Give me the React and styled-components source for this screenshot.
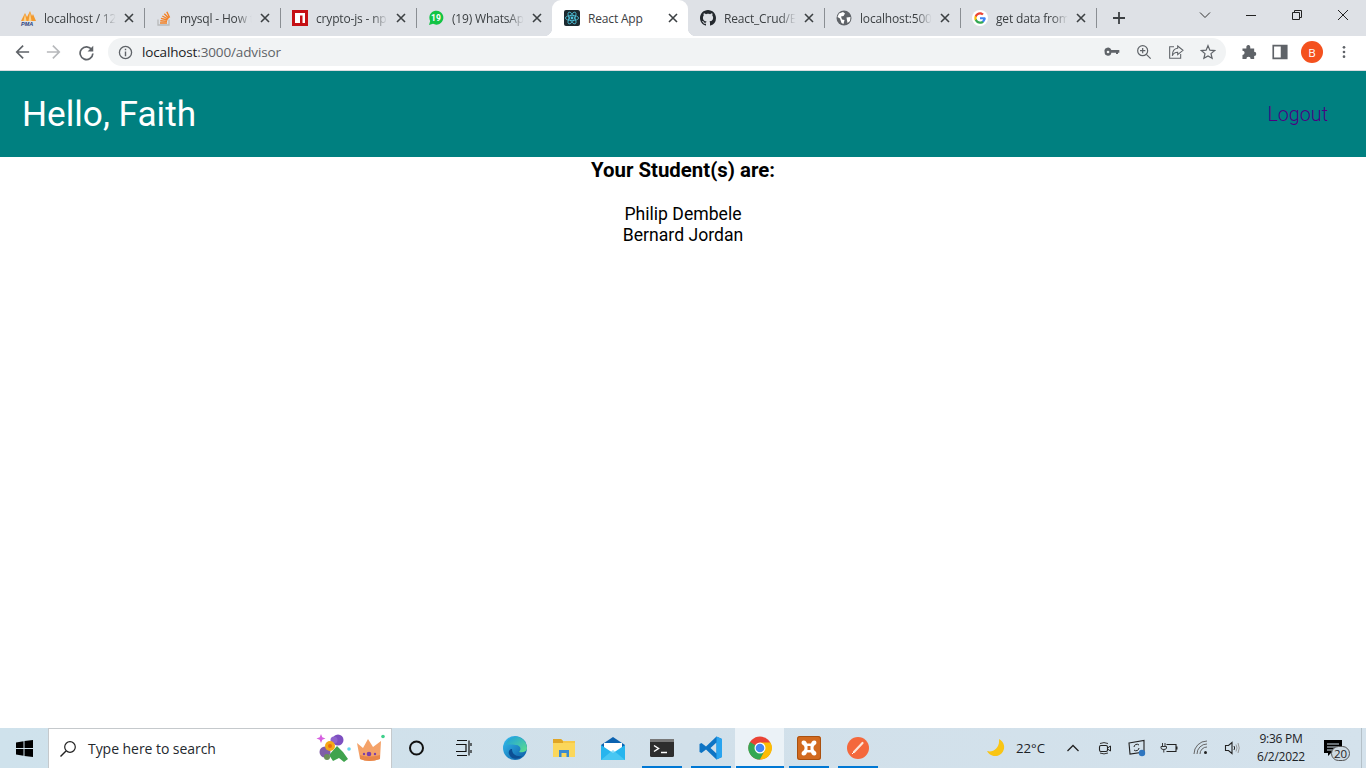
import React from 'react'
import styled, { createGlobalStyle } from 'styled-components'

const GlobalStyle = createGlobalStyle`
  html, body { margin: 0; padding: 0; height: 100%; background: #fff; overflow: hidden; }
  #root { height: 100%; }
`

const Screen = styled.div`
  display: flex;
  flex-direction: column;
  width: 1366px;
  height: 768px;
  font-family: "Open Sans", "Liberation Sans", sans-serif;
`

/* chrome tab strip */
const TabStrip = styled.div`
  display: flex;
  align-items: stretch;
  height: 36px;
  padding-left: 8px;
  background: #dee1e6;
  flex: none;
`

const Tab = styled.div`
  position: relative;
  display: flex;
  align-items: center;
  width: 136px;
  box-sizing: border-box;
  padding: 0 10px 0 12px;
  color: #3c4043;
  background: ${p => (p.$active ? '#fff' : 'transparent')};
  border-radius: ${p => (p.$active ? '9px 9px 0 0' : '0')};

  &::after {
    content: '';
    display: ${p => (p.$sep ? 'block' : 'none')};
    position: absolute;
    right: -1px;
    top: 8px;
    height: 20px;
    width: 1px;
    background: #8a8e93;
  }
`

const Flare = styled.span`
  position: absolute;
  bottom: 0;
  ${p => (p.$left ? 'left: -8px;' : 'right: -8px;')}
  width: 8px;
  height: 8px;
  background: radial-gradient(circle at ${p => (p.$left ? '0 0' : '100% 0')}, #dee1e6 8px, #fff 8.5px);
`

const Favicon = styled.span`
  display: flex;
  flex: none;
  width: 16px;
  height: 16px;
  margin-right: 8px;
`

const TabTitle = styled.span`
  flex: 1;
  white-space: nowrap;
  font-size: 12px;
  letter-spacing: -0.17px;
  mask-image: ${p => (p.$fade ? 'linear-gradient(to right, #000 72%, transparent 92%)' : 'none')};
`

const TabClose = styled.svg`
  flex: none;
  width: 10px;
  height: 10px;
  margin-left: 2px;
`

const NewTab = styled.svg`
  flex: none;
  width: 14px;
  height: 14px;
  margin: 11px 0 0 16px;
`

const WindowControls = styled.div`
  display: flex;
  margin-left: auto;
  align-items: flex-start;
`

const WindowButton = styled.div`
  display: flex;
  align-items: center;
  justify-content: center;
  width: 46px;
  height: 29px;
`

/* chrome toolbar */
const Toolbar = styled.div`
  display: flex;
  align-items: center;
  height: 32px;
  padding: 0 5px 2px 6px;
  background: #fff;
  border-bottom: 1px solid #dadce0;
  flex: none;
`

const NavButton = styled.div`
  display: flex;
  align-items: center;
  justify-content: center;
  width: 32px;
  height: 28px;
  flex: none;
`

const AddressBar = styled.div`
  display: flex;
  align-items: center;
  width: 1118px;
  height: 28px;
  margin: 0 6px;
  padding: 0 2px 0 10px;
  box-sizing: border-box;
  background: #f1f3f4;
  border-radius: 14px;
  flex: none;
`

const Url = styled.span`
  flex: 1;
  margin-left: 9px;
  font-size: 13.5px;
  letter-spacing: -0.14px;
  color: #5f6368;

  b {
    font-weight: 400;
    color: #202124;
  }
`

const Avatar = styled.div`
  display: flex;
  align-items: center;
  justify-content: center;
  width: 22px;
  height: 22px;
  border-radius: 50%;
  background: #f4511e;
  color: #fff;
  font-size: 11.5px;
`

/* the page itself */
const Header = styled.header`
  display: flex;
  align-items: center;
  justify-content: space-between;
  height: 86px;
  padding: 0 38px 0 22px;
  background: #008080;
  font-family: Roboto, sans-serif;
  flex: none;
`

const Greeting = styled.h1`
  margin: 0;
  font-size: 35.2px;
  font-weight: 400;
  color: #fff;
`

const Logout = styled.a`
  font-size: 19.7px;
  font-weight: 300;
  color: #4b0082;
`

const Content = styled.main`
  flex: 1;
  text-align: center;
  font-family: Roboto, sans-serif;
  color: #000;
`

const Title = styled.h3`
  margin: 0 0 22px;
  padding-top: 1px;
  font-size: 20.4px;
  line-height: 24px;
  font-weight: 700;
`

const Student = styled.div`
  font-size: 17.6px;
  line-height: 21px;
`

/* windows taskbar */
const Taskbar = styled.footer`
  display: flex;
  align-items: stretch;
  height: 40px;
  background: linear-gradient(to right, #cfe2ec, #d1e0ea 50%, #d4e2ec);
  flex: none;
`

const StartButton = styled.div`
  display: flex;
  align-items: center;
  justify-content: center;
  width: 48px;
`

const SearchBox = styled.div`
  display: flex;
  align-items: center;
  width: 344px;
  box-sizing: border-box;
  padding: 0 6px 0 10px;
  background: #fff;
  border: 1px solid #c5c9cc;
  border-bottom: none;
`

const SearchText = styled.span`
  flex: 1;
  margin-left: 11px;
  font-size: 14px;
  letter-spacing: -0.05px;
  color: #24292e;
`

const Sticker = styled.svg`
  flex: none;
  height: 34px;
  width: ${p => p.$w}px;
`

const TaskSlot = styled.div`
  position: relative;
  display: flex;
  align-items: center;
  justify-content: center;
  width: 49px;
  background: ${p => (p.$lit ? '#ebf2f7' : 'transparent')};

  &::after {
    content: '';
    display: ${p => (p.$open ? 'block' : 'none')};
    position: absolute;
    bottom: 0;
    left: ${p => (p.$lit ? '1px' : '5px')};
    right: ${p => (p.$lit ? '0' : '4px')};
    height: 2px;
    background: #0078d4;
  }
`

const Tray = styled.div`
  display: flex;
  align-items: stretch;
  margin-left: auto;
  color: #1c2226;
`

const Weather = styled.div`
  display: flex;
  align-items: center;
  width: 77px;
  padding-left: 6px;
  box-sizing: border-box;
  font-size: 13.2px;
  gap: 10px;
`

const TrayIcon = styled.div`
  display: flex;
  align-items: center;
  justify-content: center;
  width: 32px;
`

const Clock = styled.div`
  display: flex;
  flex-direction: column;
  align-items: center;
  justify-content: center;
  width: 64px;
  font-size: 12px;
  letter-spacing: -0.25px;
  line-height: 18px;
`

const Notify = styled.div`
  position: relative;
  display: flex;
  align-items: center;
  justify-content: center;
  width: 40px;
  margin-right: 8px;
`

const Badge = styled.span`
  position: absolute;
  left: 18px;
  top: 18px;
  width: 19px;
  height: 15px;
  line-height: 14px;
  box-sizing: border-box;
  border: 1px solid #555;
  border-radius: 8px;
  background: #ccd9e2;
  text-align: center;
  font-size: 11.5px;
`

const ShowDesktop = styled.div`
  width: 5px;
  box-sizing: border-box;
  border-left: 1px solid #b4c0c8;
`

const Ico = ({ children, size = 16, view = 24, ...rest }) => (
  <svg width={size} height={size} viewBox={`0 0 ${view} ${view}`} fill="none" {...rest}>
    {children}
  </svg>
)

const PmaIcon = () => (
  <Ico view={16}>
    <path d="M1 11 L5 3 L7 7 L10 1 L12 6 L13 4 L16 11 Z" fill="#f39a2e" />
    <path d="M5 4 L6.5 11 H3.5 Z M10 2 L11.5 11 H8.5 Z" fill="#fbd08a" />
    <text x="1" y="15.5" fontSize="5.5" fontWeight="700" fontStyle="italic" fontFamily="Liberation Sans" fill="#2a3f7c">PMA</text>
  </Ico>
)

const StackIcon = () => (
  <Ico view={16}>
    <path d="M2 9.5 V15 H13 V9.5" stroke="#b8b9ba" strokeWidth="1.3" />
    <path d="M4 13 H11 M4.3 10.7 L11 11.4 M5 8.4 L11.5 10 M6.3 6 L12 9 M8.3 3.8 L12.8 8.2 M10.8 1.8 L13.6 7.6" stroke="#f48024" strokeWidth="1.4" />
  </Ico>
)

const NpmIcon = () => (
  <Ico view={16}>
    <rect width="16" height="16" fill="#c50f14" />
    <path d="M3 3 H13 V13 H10.5 V5.5 H8 V13 H3 Z" fill="#fff" />
  </Ico>
)

const WhatsIcon = () => (
  <Ico view={16}>
    <path d="M1 15 L2.2 11 A7 7 0 1 1 5 13.8 Z" fill="#12c445" />
    <text x="8" y="11" fontSize="8.5" fontWeight="700" textAnchor="middle" fontFamily="Roboto" fill="#fff">19</text>
  </Ico>
)

const ReactIcon = () => (
  <Ico view={16}>
    <rect width="16" height="16" rx="2" fill="#1c2a30" />
    <g stroke="#4fc3dc" strokeWidth="0.8">
      <ellipse cx="8" cy="8" rx="6.6" ry="2.6" />
      <ellipse cx="8" cy="8" rx="6.6" ry="2.6" transform="rotate(60 8 8)" />
      <ellipse cx="8" cy="8" rx="6.6" ry="2.6" transform="rotate(120 8 8)" />
    </g>
    <circle cx="8" cy="8" r="1.4" fill="#4fc3dc" />
  </Ico>
)

const GithubIcon = () => (
  <Ico view={16}>
    <path
      fill="#24292e"
      d="M8 0C3.58 0 0 3.58 0 8c0 3.54 2.29 6.53 5.47 7.59.4.07.55-.17.55-.38 0-.19-.01-.82-.01-1.49-2.01.37-2.53-.49-2.69-.94-.09-.23-.48-.94-.82-1.13-.28-.15-.68-.52-.01-.53.63-.01 1.08.58 1.23.82.72 1.21 1.87.87 2.33.66.07-.52.28-.87.51-1.07-1.78-.2-3.64-.89-3.64-3.95 0-.87.31-1.59.82-2.15-.08-.2-.36-1.02.08-2.12 0 0 .67-.21 2.2.82.64-.18 1.32-.27 2-.27s1.36.09 2 .27c1.53-1.04 2.2-.82 2.2-.82.44 1.1.16 1.92.08 2.12.51.56.82 1.27.82 2.15 0 3.07-1.87 3.75-3.65 3.95.29.25.54.73.54 1.48 0 1.07-.01 1.93-.01 2.2 0 .21.15.46.55.38A8.01 8.01 0 0 0 16 8c0-4.42-3.58-8-8-8z"
    />
  </Ico>
)

const GlobeIcon = () => (
  <Ico view={16}>
    <circle cx="8" cy="8" r="7.5" fill="#5f6368" />
    <path d="M3 3.5 L7 2 L9 3.5 L7.5 6 L5 6.5 L6 9.5 L8.5 10 L7.5 14 L5.5 13 L4 8.5 L1.5 7 Z M10.5 7.5 L14.5 7 L14 11 L11.5 13 Z" fill="#fff" />
  </Ico>
)

const GoogleIcon = () => (
  <Ico view={16}>
    <circle cx="8" cy="8" r="8" fill="#fff" />
    <g transform="translate(8 8) scale(1.22) translate(-8 -8)">
      <path d="M12.4 8.2c0-.3 0-.6-.1-.9H8v1.7h2.5c-.1.6-.4 1-.9 1.4v1.1h1.5c.9-.8 1.4-2 1.8-3.3z" fill="#4285f4" />
      <path d="M8 12.8c1.3 0 2.3-.4 3.1-1.2L9.6 10.4c-.4.3-1 .5-1.6.5-1.2 0-2.3-.8-2.7-2H3.8v1.2C4.6 11.7 6.2 12.8 8 12.8z" fill="#34a853" />
      <path d="M5.3 8.9c-.2-.6-.2-1.2 0-1.8V5.9H3.8c-.6 1.2-.6 2.9 0 4.2l1.5-1.2z" fill="#fbbc05" />
      <path d="M8 5.1c.7 0 1.3.2 1.8.7l1.3-1.3C10.3 3.7 9.2 3.2 8 3.2c-1.8 0-3.4 1.1-4.2 2.7l1.5 1.2c.4-1.2 1.5-2 2.7-2z" fill="#ea4335" />
    </g>
  </Ico>
)

const tabs = [
  { title: 'localhost / 12', icon: <PmaIcon />, sep: true, fade: true },
  { title: 'mysql - How t', icon: <StackIcon />, sep: true, fade: true },
  { title: 'crypto-js - np', icon: <NpmIcon />, sep: true, fade: true },
  { title: '(19) WhatsAp', icon: <WhatsIcon />, fade: true },
  { title: 'React App', icon: <ReactIcon />, active: true },
  { title: 'React_Crud/E', icon: <GithubIcon />, sep: true, fade: true },
  { title: 'localhost:500', icon: <GlobeIcon />, sep: true, fade: true },
  { title: 'get data from', icon: <GoogleIcon />, sep: true, fade: true },
]

const CloseGlyph = () => (
  <TabClose viewBox="0 0 10 10">
    <path d="M1 1 L9 9 M9 1 L1 9" stroke="#3c4043" strokeWidth="1.6" />
  </TabClose>
)

const G = '#5f6368'

const Edge = () => (
  <Ico size={24}>
    <defs>
      <linearGradient id="edgeA" x1="0" y1="0" x2="1" y2="1">
        <stop offset="0" stopColor="#35c1f1" />
        <stop offset="1" stopColor="#0c59a4" />
      </linearGradient>
      <linearGradient id="edgeB" x1="0" y1="0" x2="1" y2="1">
        <stop offset="0" stopColor="#1b9de2" />
        <stop offset="1" stopColor="#5fe08a" />
      </linearGradient>
    </defs>
    <circle cx="12" cy="12" r="12" fill="url(#edgeA)" />
    <path d="M3 8 C5 2 11 0 15 1 C20 2 24 7 24 12 C24 16 19 17 16 16 C19 13 17 9 13 9 C8 8 4 9 3 8 Z" fill="url(#edgeB)" />
    <path d="M9 13 C9 18 13 21 19 20 C16 24 8 24 6 18 C5 15 7 13 9 13 Z" fill="#0c4f94" />
  </Ico>
)

const Folder = () => (
  <Ico size={24}>
    <path d="M1 3 H9 L11 5 H23 V21 H1 Z" fill="#f7c948" />
    <path d="M1 3 H9 L11 5 V7 H1 Z" fill="#e0a526" />
    <path d="M1 7 H23 V21 H1 Z" fill="#fbd75b" />
    <path d="M7 21 V14 H17 V21 H14.5 V17 H9.5 V21 Z" fill="#3b8bd0" />
  </Ico>
)

const Mail = () => (
  <Ico size={24}>
    <path d="M0 9 L12 1 L24 9 V24 H0 Z" fill="#0b62b0" />
    <path d="M3 7 H21 V17 H3 Z" fill="#fff" />
    <path d="M0 9 L12 17 L24 9 V24 H0 Z" fill="#26b5ee" />
    <path d="M0 24 L12 14 L24 24 Z" fill="#55cff5" opacity=".7" />
  </Ico>
)

const Terminal = () => (
  <Ico size={24}>
    <rect y="3" width="24" height="18" rx="1.5" fill="#2e2e2e" />
    <rect y="3" width="24" height="3" fill="#777" />
    <path d="M4 9.5 L8.5 12.5 L4 15.5" stroke="#fff" strokeWidth="1.5" />
    <path d="M11 16.5 H17" stroke="#fff" strokeWidth="1.5" />
  </Ico>
)

const VsCode = () => (
  <Ico size={24}>
    <path d="M17.5 0.5 L23 3 V21 L17.5 23.5 L7 13.5 L2.5 17 L0.5 16 V8 L2.5 7 L7 10.5 Z M17.5 6.5 L11.5 12 L17.5 17.5 Z" fill="#0e74c4" />
    <path d="M17.5 0.5 L23 3 V21 L17.5 23.5 Z" fill="#29a4ef" />
  </Ico>
)

const ChromeLogo = () => (
  <Ico size={24}>
    <circle cx="12" cy="12" r="11.5" fill="#ea4335" />
    <path d="M12 12 L2 6 A11.5 11.5 0 0 0 12 23.5 L17.5 14 Z" fill="#34a853" />
    <path d="M12 6.5 H22.5 A11.5 11.5 0 0 1 12 23.5 L17 14 Z" fill="#fbbc05" />
    <circle cx="12" cy="12" r="5.5" fill="#fff" />
    <circle cx="12" cy="12" r="4.3" fill="#4285f4" />
  </Ico>
)

const Xampp = () => (
  <Ico size={24}>
    <rect width="24" height="24" rx="2.5" fill="#d2691e" />
    <rect x="0.5" y="0.5" width="23" height="23" rx="2.5" stroke="#a9500f" />
    <path
      d="M6.5 4.5 C9 4.5 9.5 6 10 7.5 H14 C14.5 6 15 4.5 17.5 4.5 C20 4.5 20 8 18 9 C16 10 16 14 18 15 C20 16 20 19.5 17.5 19.5 C15 19.5 14.5 18 14 16.5 H10 C9.5 18 9 19.5 6.5 19.5 C4 19.5 4 16 6 15 C8 14 8 10 6 9 C4 8 4 4.5 6.5 4.5 Z M10.5 10 H13.5 V14 H10.5 Z"
      fill="#fff"
      fillRule="evenodd"
    />
  </Ico>
)

const Sublime = () => (
  <Ico size={24}>
    <circle cx="12" cy="12" r="11" fill="#f4683c" />
    <path d="M8 16 L16.5 7" stroke="#fde5d8" strokeWidth="2.2" strokeLinecap="round" />
    <path d="M6 18 L8 16" stroke="#fff" strokeWidth="1" />
  </Ico>
)

const Bouquet = () => (
  <Sticker $w={40} viewBox="0 0 40 34">
    <path d="M6 2 L7.3 5.2 L10.5 6.5 L7.3 7.8 L6 11 L4.7 7.8 L1.5 6.5 L4.7 5.2 Z" fill="#d65fe0" />
    <path d="M14 23 L22 14 L28 20 L33 27 L29 30 L24 26 L18 29 Z" fill="#3fa34d" />
    <circle cx="23" cy="8" r="5.5" fill="#7d4fc0" />
    <circle cx="19" cy="8" r="3.5" fill="#8f63cc" />
    <circle cx="10" cy="20" r="5.5" fill="#7f5ea8" />
    <circle cx="12" cy="25" r="3" fill="#6a8f5a" />
    <circle cx="15" cy="14" r="5" fill="#f4a916" />
    <circle cx="15" cy="14" r="2" fill="#e86c12" />
    <circle cx="34" cy="17" r="1.8" fill="#62d5ea" />
  </Sticker>
)

const Crown = () => (
  <Sticker $w={30} viewBox="0 0 30 34">
    <path d="M2 11 L8 16 L13 7 L18 15 L26 9 L25 27 Q14 31 5 27 Z" fill="#f4a269" />
    <path d="M5 23 Q14 26 25 23 L25 27 Q14 31 5 27 Z" fill="#e98648" />
    <circle cx="14" cy="22" r="2.3" fill="#7b3fa8" />
    <circle cx="9" cy="22" r="1.2" fill="#7b3fa8" />
    <circle cx="20" cy="22" r="1.2" fill="#7b3fa8" />
    <circle cx="28" cy="4.5" r="1.8" fill="#3fd08c" />
  </Sticker>
)

const taskApps = [
  { key: 'cortana', icon: <Ico size={20} view={20}><circle cx="9.5" cy="10" r="6.5" stroke="#111" strokeWidth="2" /></Ico> },
  {
    key: 'view',
    icon: (
      <Ico size={20} view={20}>
        <path d="M1 2.5 H11 M1 17.5 H11 M0 6.5 H10 V13.500 H0 M13 2.5 V17.500 M15 5 V8 M15 12 V15" stroke="#111" strokeWidth="1.2" />
      </Ico>
    ),
  },
  { key: 'edge', icon: <Edge /> },
  { key: 'folder', icon: <Folder /> },
  { key: 'mail', icon: <Mail /> },
  { key: 'term', icon: <Terminal />, open: true },
  { key: 'code', icon: <VsCode />, open: true },
  { key: 'chrome', icon: <ChromeLogo />, open: true, lit: true },
  { key: 'xampp', icon: <Xampp />, open: true },
  { key: 'sublime', icon: <Sublime />, open: true },
]

const App = () => {
  return (
    <Screen>
      <GlobalStyle />
      <TabStrip>
        {tabs.map(t => (
          <Tab key={t.title} $active={t.active} $sep={t.sep}>
            {t.active && <Flare $left />}
            <Favicon>{t.icon}</Favicon>
            <TabTitle $fade={t.fade}>{t.title}</TabTitle>
            <CloseGlyph />
            {t.active && <Flare />}
          </Tab>
        ))}
        <NewTab viewBox="0 0 14 14">
          <path d="M7 1 V13 M1 7 H13" stroke="#3c4043" strokeWidth="1.8" />
        </NewTab>
        <WindowControls>
          <WindowButton>
            <Ico size={12} view={12}><path d="M1 3.5 L6 8.5 L11 3.5" stroke="#333" strokeWidth="1" /></Ico>
          </WindowButton>
          <WindowButton>
            <Ico size={12} view={12}><path d="M1 6.5 H11" stroke="#222" strokeWidth="1" /></Ico>
          </WindowButton>
          <WindowButton>
            <Ico size={12} view={12}><path d="M1.5 3.5 H8.5 V10.5 H1.5 Z M3.5 3.5 V1.5 H10.5 V8.5 H8.5" stroke="#222" strokeWidth="1" /></Ico>
          </WindowButton>
          <WindowButton>
            <Ico size={12} view={12}><path d="M1 1 L11 11 M11 1 L1 11" stroke="#222" strokeWidth="1" /></Ico>
          </WindowButton>
        </WindowControls>
      </TabStrip>

      <Toolbar>
        <NavButton>
          <Ico size={18}><path d="M13.5 3.5 L5 12 L13.5 20.5 M5.5 12 H21.5" stroke={G} strokeWidth="2.2" /></Ico>
        </NavButton>
        <NavButton>
          <Ico size={18}><path d="M10.5 3.5 L19 12 L10.5 20.5 M18.5 12 H2.5" stroke="#b6b8bb" strokeWidth="2.2" /></Ico>
        </NavButton>
        <NavButton>
          <Ico size={17}>
            <path d="M19.5 8 A9 9 0 1 0 21 13.5" stroke={G} strokeWidth="2.4" />
            <path d="M21.5 2.5 V10.5 H13.5 Z" fill={G} />
          </Ico>
        </NavButton>
        <AddressBar>
          <Ico size={15} view={16}>
            <circle cx="8" cy="8" r="6.5" stroke={G} strokeWidth="1.4" />
            <path d="M8 7 V12 M8 4 V5.6" stroke={G} strokeWidth="1.5" />
          </Ico>
          <Url><b>localhost</b>:3000/advisor</Url>
          <NavButton>
            <Ico>
              <path d="M1 12 A5 5 0 0 1 11 9 H23 V13 H21 V15 H18 V13 H11 A5 5 0 0 1 1 12 Z M6 10 A2 2 0 1 0 6.1 14 A2 2 0 1 0 6 10 Z" fill={G} fillRule="evenodd" />
            </Ico>
          </NavButton>
          <NavButton>
            <Ico>
              <circle cx="10" cy="10" r="7.5" stroke={G} strokeWidth="1.8" />
              <path d="M15.5 15.5 L22 22 M10 6 V14 M6 10 H14" stroke={G} strokeWidth="1.8" />
            </Ico>
          </NavButton>
          <NavButton>
            <Ico>
              <path d="M9 4 H2.5 V21.5 H19 V15" stroke={G} strokeWidth="1.6" />
              <path d="M14.5 3 L22.5 9.5 L14.5 16 V12.5 C10.5 12.5 8 14 6.5 17.5 C6.5 11 9.5 7 14.5 6.5 Z" stroke={G} strokeWidth="1.6" />
            </Ico>
          </NavButton>
          <NavButton>
            <Ico>
              <path d="M12 2.5 L14.8 9.2 L22 9.8 L16.5 14.5 L18.2 21.5 L12 17.8 L5.8 21.5 L7.5 14.5 L2 9.8 L9.2 9.2 Z" stroke={G} strokeWidth="1.8" />
            </Ico>
          </NavButton>
        </AddressBar>
        <NavButton>
          <Ico size={17}>
            <path d="M9 3.5 A2.8 2.8 0 0 1 14.5 4.5 V6.5 H20 V11 A2.9 2.9 0 1 1 20 17 V21 H15 A3 3 0 1 0 9 21 H3.5 V15.5 A3 3 0 1 0 3.5 9.5 V6.5 H9 Z" fill={G} />
          </Ico>
        </NavButton>
        <NavButton>
          <Ico size={18}>
            <path d="M3 3.5 H21 V20.5 H3 Z" stroke={G} strokeWidth="2.2" />
            <rect x="13" y="3.5" width="8" height="17" fill={G} />
          </Ico>
        </NavButton>
        <NavButton><Avatar>B</Avatar></NavButton>
        <NavButton>
          <Ico>
            <circle cx="12" cy="5" r="2" fill={G} />
            <circle cx="12" cy="12" r="2" fill={G} />
            <circle cx="12" cy="19" r="2" fill={G} />
          </Ico>
        </NavButton>
      </Toolbar>

      <Header>
        <Greeting>Hello, Faith</Greeting>
        <Logout>Logout</Logout>
      </Header>

      <Content>
        <Title>Your Student(s) are:</Title>
        <Student>Philip Dembele</Student>
        <Student>Bernard Jordan</Student>
      </Content>

      <Taskbar>
        <StartButton>
          <Ico size={17} view={17}>
            <path d="M0 2.5 L7.5 1.3 V8 H0 Z M8.5 1.1 L17 0 V8 H8.5 Z M0 9 H7.5 V15.7 L0 14.5 Z M8.5 9 H17 V17 L8.5 15.9 Z" fill="#000" />
          </Ico>
        </StartButton>
        <SearchBox>
          <Ico size={18} view={18}>
            <circle cx="11" cy="7" r="5.3" stroke="#222" strokeWidth="1.2" />
            <path d="M7 11 L1.5 16.5" stroke="#222" strokeWidth="1.4" />
          </Ico>
          <SearchText>Type here to search</SearchText>
          <Bouquet />
          <Crown />
        </SearchBox>
        {taskApps.map(a => (
          <TaskSlot key={a.key} $open={a.open} $lit={a.lit}>{a.icon}</TaskSlot>
        ))}
        <Tray>
          <Weather>
            <Ico size={20} view={20}>
              <path d="M13 1 A9 9 0 1 1 1 13 C7 15 14 10 13 1 Z" fill="#f9c514" />
            </Ico>
            22°C
          </Weather>
          <TrayIcon>
            <Ico size={14} view={14}><path d="M1.5 10 L7 4.5 L12.5 10" stroke="#222" strokeWidth="1.3" /></Ico>
          </TrayIcon>
          <TrayIcon>
            <Ico size={18} view={18}>
              <path d="M4 4.5 A6 3 0 0 1 12 4.5 M4 14 A6 3 0 0 0 12 14" stroke="#333" strokeWidth="1" />
              <rect x="3.5" y="6.5" width="8" height="6" rx="1.5" stroke="#222" strokeWidth="1.1" />
              <path d="M11.5 9 L14.5 7 V12 L11.5 10" stroke="#222" strokeWidth="1" />
            </Ico>
          </TrayIcon>
          <TrayIcon>
            <Ico size={18} view={18}>
              <path d="M1 4 L16 1.5 V13 L2 15 Z" stroke="#222" strokeWidth="1.1" />
              <path d="M6 8 A3 3 0 0 1 11 6 M11 9 A3 3 0 0 1 6 11" stroke="#222" strokeWidth="1" />
              <circle cx="14" cy="14" r="3.2" fill="#2f76c0" />
            </Ico>
          </TrayIcon>
          <TrayIcon>
            <Ico size={18} view={18}>
              <path d="M6.5 5.5 H16 V12.5 H6.5" stroke="#222" strokeWidth="1.1" />
              <path d="M2.5 4 V7 M5 4 V7 M1 7.5 H6.5 V9 Q6.5 10.5 3.8 10.5 Q1 10.5 1 9 Z M3.8 10.5 V13.5" stroke="#222" strokeWidth="0.9" />
              <rect x="16" y="7.5" width="1.5" height="3" fill="#222" />
            </Ico>
          </TrayIcon>
          <TrayIcon>
            <Ico size={18} view={18}>
              <path d="M2 15 A13 13 0 0 1 15 2 M5 15 A10 10 0 0 1 15 5 M8 15 A7 7 0 0 1 15 8" stroke="#666" strokeWidth="1" />
              <circle cx="13.5" cy="13.5" r="1.5" fill="#222" />
            </Ico>
          </TrayIcon>
          <TrayIcon>
            <Ico size={18} view={18}>
              <path d="M1.5 6.5 H4.5 L8 3.5 V14.5 L4.5 11.5 H1.5 Z" stroke="#222" strokeWidth="1.1" />
              <path d="M10 7 Q11.3 9 10 11" stroke="#222" strokeWidth="1" />
              <path d="M12 5.5 Q14 9 12 12.5 M14 4 Q16.5 9 14 14" stroke="#999" strokeWidth="1" />
            </Ico>
          </TrayIcon>
          <Clock>
            <span>9:36 PM</span>
            <span>6/2/2022</span>
          </Clock>
          <Notify>
            <Ico size={20} view={20}>
              <path d="M1 2 H19 V15 H8 L5 18 V15 H1 Z" fill="#000" />
              <path d="M4 6 H16 M4 9 H16 M4 12 H11" stroke="#d1e0ea" strokeWidth="1" />
            </Ico>
            <Badge>20</Badge>
          </Notify>
          <ShowDesktop />
        </Tray>
      </Taskbar>
    </Screen>
  )
}

export default App
